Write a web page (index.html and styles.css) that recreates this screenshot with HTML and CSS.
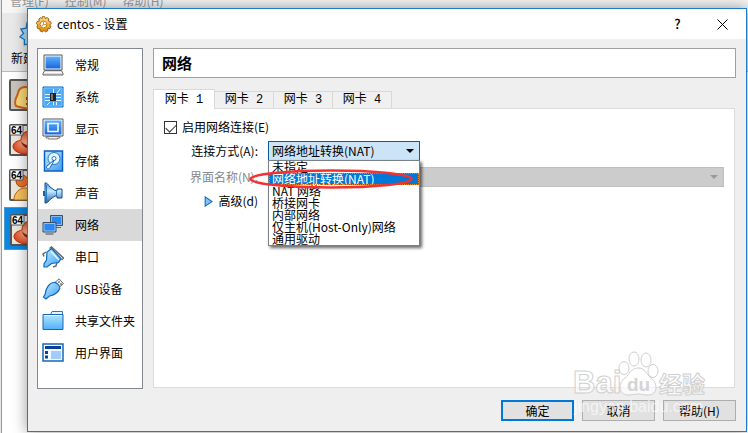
FILE: index.html
```html
<!DOCTYPE html>
<html lang="zh-CN">
<head>
<meta charset="utf-8">
<title>centos - 设置</title>
<link rel="stylesheet" href="styles.css">
</head>
<body>
<svg class="defs" aria-hidden="true">
  <defs>
    <linearGradient id="blue" x1="0" y1="0" x2="0" y2="1"><stop offset="0" stop-color="#5ab0ff"/><stop offset="1" stop-color="#1a66dd"/></linearGradient>
    <linearGradient id="sky" x1="0" y1="0" x2="1" y2="1"><stop offset="0" stop-color="#c4ebff"/><stop offset="1" stop-color="#3c9df0"/></linearGradient>
    <linearGradient id="folder" x1="0" y1="0" x2="0" y2="1"><stop offset="0" stop-color="#b4e4ff"/><stop offset="1" stop-color="#4fb0fa"/></linearGradient>
    <linearGradient id="cone" x1="0" y1="0" x2="0" y2="1"><stop offset="0" stop-color="#3f97e0"/><stop offset=".4" stop-color="#c8eaff"/><stop offset="1" stop-color="#1761b8"/></linearGradient>
    <linearGradient id="gold" x1="0" y1="0" x2="0" y2="1"><stop offset="0" stop-color="#ffe08a"/><stop offset="1" stop-color="#de8500"/></linearGradient>
    <radialGradient id="red"><stop offset="0" stop-color="#ffc09a"/><stop offset="1" stop-color="#df4a22"/></radialGradient>
    <symbol id="hat" viewBox="0 0 32 32">
      <rect x="1" y="1" width="30" height="30" rx="1" fill="#ece6dc" stroke="#555" stroke-width="2"/>
      <path d="M4 23c0-5 5-6 8-7 0-6 4-10 9-8 6-2 9 2 9 8v13c-10 3-25 1-26-6z" fill="url(#red)" stroke="#b23312"/>
      <path d="M12 17c3 5 12 6 18 4v4c-8 2-17-1-18-8z" fill="#8e210c"/>
      <path d="M1 1h13v10H1z" fill="#fff" stroke="#555"/>
      <text x="2" y="10" class="bits">64</text>
    </symbol>
  </defs>
</svg>

<div class="manager">
  <nav class="menu"><span>管理(F)</span><span>控制(M)</span><span>帮助(H)</span></nav>
  <div class="toolbar">
    <svg class="new-icon" viewBox="0 0 32 32"><path d="M16 1l3 5 5-3 1 6 6 1-3 5 3 5-6 2-1 6-6-2-4 4-3-5-6 1 0-6-5-3 4-4-3-5 6-1 1-6 5 2z" fill="#a6dcfa" stroke="#1c75be" stroke-width="1.5"/></svg>
    <span>新建</span>
  </div>
  <div class="machines">
    <div class="machine"><svg viewBox="0 0 32 32"><rect x="1" y="1" width="30" height="30" rx="1" fill="#c9c3ba" stroke="#555" stroke-width="2"/><path d="M7 27c-3-6 1-8 2-13C10 8 16 7 20 9c5-2 9 0 11 4v17C22 31 14 29 7 27z" fill="#f8d777" stroke="#c9601d" stroke-width="2"/><path d="M18 18v3M18 24v2" stroke="#a93c0d" stroke-width="2"/></svg></div>
    <div class="machine"><svg><use href="#hat"/></svg></div>
    <div class="machine"><svg viewBox="0 0 32 32"><rect x="1" y="1" width="30" height="30" rx="1" fill="#ece6dc" stroke="#555" stroke-width="2"/><circle cx="13" cy="12" r="6" fill="#ee7422" stroke="#a93c0d"/><path d="M5 31c0-7 5-12 12-12h14v12z" fill="#f6c25c" stroke="#b9670f"/><path d="M1 1h13v10H1z" fill="#fff" stroke="#555"/><text x="2" y="10" class="bits">64</text></svg></div>
    <div class="machine current"><svg><use href="#hat"/></svg></div>
  </div>
</div>

<div class="dialog" role="dialog" aria-labelledby="dialog-title">
  <header class="titlebar">
    <svg class="gear" viewBox="0 0 16 16"><path d="M7 .6h2l.6 1.8 1.8-.9 1.6 1.2-.5 1.9 1.9.6.9 1.8-1.3 1.4.9 1.7-1 1.8-1.9.1-.2 2-1.9.9L8.400 13.700 6.800 15l-1.900-.8-.2-2-2-.2-.9-1.900 1-1.600L1.200 7l.8-1.800 2-.4-.3-2 1.600-1.200 1.400.900z" fill="url(#gold)" stroke="#8a4b00" stroke-width=".8"/><circle cx="8" cy="8" r="3.200" fill="#fff" stroke="#b87000" stroke-width=".8"/><path d="M8 5v3h3M8 8l-2 2" stroke="#dc9a30" fill="none"/></svg>
    <h1 id="dialog-title">centos - 设置</h1>
    <button class="caption" type="button" aria-label="帮助">?</button>
    <button class="caption" type="button" aria-label="关闭"><svg viewBox="0 0 11 11"><path d="M.5.5l10 10M10.500.5l-10 10" stroke="#000" fill="none"/></svg></button>
  </header>

  <div class="content">
    <ul class="pages">
      <li><svg viewBox="0 0 22 22"><path d="M2 1h18v15H2z" fill="#fff" stroke="#555"/><path d="M3.500 2.500h15v12h-15z" fill="url(#blue)"/><path d="M2.500 16.500h17l1.500 3v1.500H1v-1.500z" fill="#ddd" stroke="#666"/><path d="M2 18.500h18" stroke="#fff"/></svg><span>常规</span></li>
      <li><svg viewBox="0 0 22 22"><path d="M1 1h20v20H1z" fill="#4aa6f6" stroke="#0b5fbe"/><path d="M2 2h18v18H2z" fill="none" stroke="#7cc8ff"/><path d="M3 8.500h5M3 11.500h5M3 14.500h5M14 8.500h5M14 11.500h5M14 14.500h5M11.500 3v4M15 7l3-4M11.500 16v3M14.500 16v3M8 16l-3 3" stroke="#e3f7ff" fill="none"/><path d="M8 7h6v8H8z" fill="#222"/><path d="M9 8h2v6H9z" fill="#777"/></svg><span>系统</span></li>
      <li><svg viewBox="0 0 22 22"><path d="M1 1h20v17H1z" fill="#fff" stroke="#555"/><path d="M2.500 2.500h17v14h-17z" fill="url(#blue)"/><path d="M6 5.500h10v8H6z" fill="none" stroke="#fff" stroke-width="1.500"/><path d="M4 18.500h14v1.500h-2.500v1h-9v-1H4z" fill="#eee" stroke="#777"/></svg><span>显示</span></li>
      <li><svg viewBox="0 0 22 22"><path d="M2.500 1h18v20h-18z" fill="url(#sky)" stroke="#0b5fbe" stroke-width="1.500"/><circle cx="12" cy="8.500" r="6" fill="#e4f6ff" stroke="#2478c6"/><circle cx="12" cy="8.500" r="2" fill="#fff" stroke="#2478c6"/><path d="M12 10l-7 6c-1.500 2 .5 4 2.500 2.500l3-5z" fill="#fff" stroke="#1560b0"/></svg><span>存储</span></li>
      <li><svg viewBox="0 0 22 22"><path d="M3 1c2-.5 3.500 2 5 4l5 3.500h2V7h5v9h-5v-2h-2l-5 3.500c-1.500 2-3 4-5 3.500z" fill="url(#cone)" stroke="#164e87"/><path d="M4.500 3v17M14.500 8v6" stroke="#2b7cc8" fill="none"/><path d="M2 9v5" stroke="#1c5f9f" stroke-width="2"/></svg><span>声音</span></li>
      <li class="selected"><svg viewBox="0 0 22 22"><path d="M8.500 1.500h12v10h-12z" fill="#2b86ee" stroke="#3c4f60"/><path d="M9.500 2.500h10v8h-10z" fill="none" stroke="#8fcaff" stroke-width=".8"/><path d="M14 13.500h5" stroke="#567"/><path d="M1 8.500h13v9.500H1z" fill="#2b86ee" stroke="#3c4f60"/><path d="M2 9.500h11v7.500H2z" fill="none" stroke="#9bd4ff" stroke-width=".8"/><path d="M3.500 20h8" stroke="#678" stroke-width="1.500"/></svg><span>网络</span></li>
      <li><svg viewBox="0 0 22 22"><path d="M7.500 2.500l2-1.500 12 11-2 2M2 10.500L1 8l3-2M11 21l3-1 1-4" fill="none" stroke="#666" stroke-width="1.500"/><path d="M9.500 2.500l9.500 10-2.500 4-7 1-4.500 3.500H2v-3L4.500 14l.5-8z" fill="url(#sky)" stroke="#0b6ac0" stroke-width="1.200"/><path d="M9 5.500l8 8.500" stroke="#e6f8ff" stroke-width="1.500"/></svg><span>串口</span></li>
      <li><svg viewBox="0 0 22 22"><path d="M13 4.500L17 .8 21.500 5.500 17.500 9z" fill="#f4f4f4" stroke="#666"/><path d="M16.500 3.500l1 1M18.500 5.500l1 1" stroke="#444" stroke-width="1.500"/><path d="M11.500 4.500c3-.5 7 3.500 6.300 6-1.500 4-6 7-10.300 7.500L4 21l-2.500-2 1.700-3c.3-5 3.800-11 8.300-11.500z" fill="url(#sky)" stroke="#0b6ac0" stroke-width="1.200"/></svg><span>USB设备</span></li>
      <li><svg viewBox="0 0 22 22"><path d="M8 6l2-4.500h10.500V6z" fill="#e4f5ff" stroke="#2478c6"/><path d="M1 4.500h20v15H1z" fill="url(#folder)" stroke="#1767b8"/><path d="M2 5.500h18" stroke="#def5ff"/></svg><span>共享文件夹</span></li>
      <li><svg viewBox="0 0 22 22"><path d="M1 2h20v17H1z" fill="#f4faff" stroke="#1767b8" stroke-width="1.500"/><path d="M3 4h16v3H3z" fill="#0a3f9f"/><path d="M3 9h3v3H3zM3 13.500h3v3H3z" fill="#0a3f9f"/><path d="M9 9h10v8H9z" fill="#a2ccff"/></svg><span>用户界面</span></li>
    </ul>

    <main class="page">
      <h2>网络</h2>
      <div class="tabs" role="tablist">
        <button class="tab active" type="button" role="tab" aria-selected="true">网卡 1</button>
        <button class="tab" type="button" role="tab">网卡 2</button>
        <button class="tab" type="button" role="tab">网卡 3</button>
        <button class="tab" type="button" role="tab">网卡 4</button>
      </div>
      <form class="panel">
        <div class="check"><input type="checkbox" id="enable" checked><label for="enable">启用网络连接(E)</label></div>
        <div class="fields">
          <label for="mode">连接方式(A):</label>
          <div class="combo open">
            <select id="mode"><option>网络地址转换(NAT)</option></select>
            <ul class="popup">
              <li>未指定</li>
              <li class="hover">网络地址转换(NAT)</li>
              <li>NAT 网络</li>
              <li>桥接网卡</li>
              <li>内部网络</li>
              <li>仅主机(Host-Only)网络</li>
              <li>通用驱动</li>
            </ul>
            <svg class="marker" viewBox="0 0 164 20"><ellipse cx="82" cy="10" rx="80.500" ry="8.500" fill="none" stroke="#f23232" stroke-width="2.500"/></svg>
          </div>
          <label class="dim" for="iface">界面名称(N):</label>
          <div class="combo off"><select id="iface" disabled><option></option></select></div>
          <button class="advanced" type="button"><svg viewBox="0 0 8 10"><path d="M1 .8L7.300 5 1 9.200z" fill="#7cc4fa" stroke="#1767b8"/></svg>高级(d)</button>
        </div>
      </form>
    </main>
  </div>

  <footer class="actions">
    <button class="default" type="button">确定</button>
    <button type="button">取消</button>
    <button type="button">帮助(H)</button>
  </footer>
</div>

<svg class="watermark" viewBox="0 0 150 70" aria-hidden="true">
  <g class="mark">
    <ellipse cx="51" cy="18" rx="5" ry="6.500"/><ellipse cx="61" cy="9" rx="5" ry="7"/><ellipse cx="73" cy="10" rx="5" ry="7"/><ellipse cx="80" cy="21" rx="5" ry="6.500"/>
    <path d="M65 18c7 0 8 6 13 10 7 5 7 17-3 17-4 0-7-1-10-1s-6 1-10 1c-10 0-10-12-3-17 5-4 6-10 13-10z"/>
    <text x="0" y="43" class="brand">Bai</text>
    <text x="86" y="43" class="cjk">经验</text>
    <text x="1" y="62" class="site">jingyan.baidu.com</text>
  </g>
  <text x="54" y="41" class="du">du</text>
</svg>
</body>
</html>
```
FILE: styles.css
```css
* { box-sizing: border-box; }
body {
  margin: 0;
  height: 100vh;
  overflow: hidden;
  position: relative;
  background: #e6e6e6;
  color: #000;
  font: 12px/16px "Noto Sans CJK SC", sans-serif;
}
button, select, input { font: inherit; color: inherit; margin: 0; padding: 0; border-radius: 0; }
h1, h2, ul { margin: 0; padding: 0; list-style: none; font-size: 12px; font-weight: 400; }
.defs { position: absolute; width: 0; height: 0; }

/* manager window behind the dialog */
.manager {
  height: 100vh;
  margin-left: 1px;
  border-left: 1px solid #999;
  background: #fff;
}
.menu {
  display: flex;
  gap: 16px;
  height: 13px;
  padding-left: 8px;
  overflow: hidden;
  line-height: 1px;
  background: #f6f6f6;
  color: #999;
}
.toolbar { height: 59px; padding: 9px 0 0 9px; background: #e9e9e9; border-bottom: 1px solid #bbb; }
.toolbar span { display: block; white-space: nowrap; }
.new-icon { display: block; width: 32px; height: 28px; margin-left: 7px; }
.machine { height: 45px; padding: 7px; }
.machine svg { display: block; width: 32px; height: 32px; }
.machine.current { width: 90px; margin-left: 2px; padding: 6px 5px; height: 43px; background: #0a86e0; border: 1px solid #4a9ad4; }
.bits { font: 700 10px "Liberation Sans", sans-serif; }

.dialog {
  position: absolute;
  inset: 8px 1px 1px 27px;
  display: flex;
  flex-direction: column;
  background: #efefef;
  border: 1px solid #1d7cc8;
  box-shadow: 0 0 14px rgba(0, 0, 0, .4);
}
.titlebar { display: flex; align-items: center; height: 30px; padding: 0 1px 0 7px; background: #fff; }
.gear { width: 17px; height: 17px; margin-right: 5px; }
.titlebar h1 { flex: 1; }
.caption { width: 45px; height: 28px; border: 0; background: none; font-weight: 500; font-size: 13px; }
.caption svg { display: block; width: 11px; height: 11px; margin: 0 auto; }

.content { flex: 1; display: flex; gap: 10px; padding: 9px 10px 0 9px; min-height: 0; }
.pages { width: 106px; border: 1px solid #828790; background: #fff; }
.pages li { display: flex; align-items: center; gap: 11px; height: 32px; padding-left: 4px; white-space: nowrap; }
.pages svg { width: 22px; height: 22px; flex: none; }
.pages .selected { background: #d9d9d9; }

.page { flex: 1; display: flex; flex-direction: column; padding-bottom: 1px; }
.page h2 { height: 30px; padding-left: 8px; border: 1px solid #a0a0a0; background: #fff; font-size: 15px; font-weight: 700; line-height: 28px; }
.tabs { display: flex; align-items: flex-end; margin: 11px 0 -1px; height: 20px; }
.tab { width: 59px; height: 18px; border: 1px solid #d9d9d9; border-left: 0; background: #f0f0f0; font-family: "Liberation Mono", "Noto Sans CJK SC", monospace; line-height: 16px; }
.tab.active { z-index: 1; width: 62px; height: 20px; border-left: 1px solid #d9d9d9; border-bottom: 0; background: #fff; }
.panel { flex: 1; margin-right: 1px; padding: 10px; border: 1px solid #dcdcdc; background: #fff; }
.check { display: flex; align-items: center; gap: 5px; height: 16px; }
.check input { appearance: none; width: 13px; height: 13px; border: 1px solid #333; background: #fff; }
.check input:checked::before {
  content: "";
  display: block;
  width: 9px;
  height: 5px;
  margin: 2px 1px;
  border: solid #333;
  border-width: 0 0 1px 1px;
  transform: rotate(-45deg);
}
.fields { display: grid; grid-template-columns: 96px 1fr; gap: 6px 8px; margin-top: 6px; align-items: center; }
.fields label { text-align: right; padding-right: 2px; }
.fields .dim { color: #888; }
.combo { position: relative; height: 20px; }
.combo select { appearance: none; display: block; width: 100%; height: 20px; padding-left: 3px; opacity: 1; border: 1px solid #0a5a9c; background: #cce4f7; }
.combo::after { content: ""; position: absolute; right: 6px; top: 8px; border: 4px solid transparent; border-top-color: #000; border-bottom: 0; }
.combo.open { width: 152px; }
.combo.off select { border-color: #bfbfbf; background: #ccc; }
.combo.off::after { border-top-color: #999; }
.popup {
  position: absolute;
  z-index: 2;
  top: 19px;
  left: 0;
  width: 100%;
  border: 1px solid #7a8087;
  background: #fff;
  box-shadow: 2px 2px 3px rgba(0, 0, 0, .6);
}
.popup li { height: 12px; padding-left: 3px; line-height: 12px; white-space: nowrap; }
.popup .hover { background: #0078d7; color: #fff; outline: 1px dotted #e8852c; outline-offset: -1px; }
.marker { position: absolute; z-index: 3; left: -19px; top: 28px; width: 164px; height: 20px; }
.advanced { justify-self: end; display: flex; align-items: center; gap: 5px; padding-right: 2px; border: 0; background: none; }
.advanced svg { width: 9px; height: 11px; }

.actions { display: flex; justify-content: flex-end; gap: 8px; padding: 11px 10px 10px; }
.actions button { width: 73px; height: 21px; border: 1px solid #adadad; background: #e1e1e1; line-height: 16px; }
.actions .default { border: 2px solid #0078d7; }

.watermark { position: absolute; right: 25px; bottom: 13px; width: 150px; height: 70px; pointer-events: none; }
.mark { fill: rgba(255, 255, 255, .65); stroke: #d0d0d0; stroke-width: 1px; }
.brand { font: 700 31px "Liberation Sans", sans-serif; }
.cjk { font: 700 23px "Noto Sans CJK SC", sans-serif; }
.site { font: 16px "Liberation Sans", sans-serif; stroke-width: 0; }
.du { font: 700 19px "Liberation Sans", sans-serif; fill: #d4d4d4; }
```
